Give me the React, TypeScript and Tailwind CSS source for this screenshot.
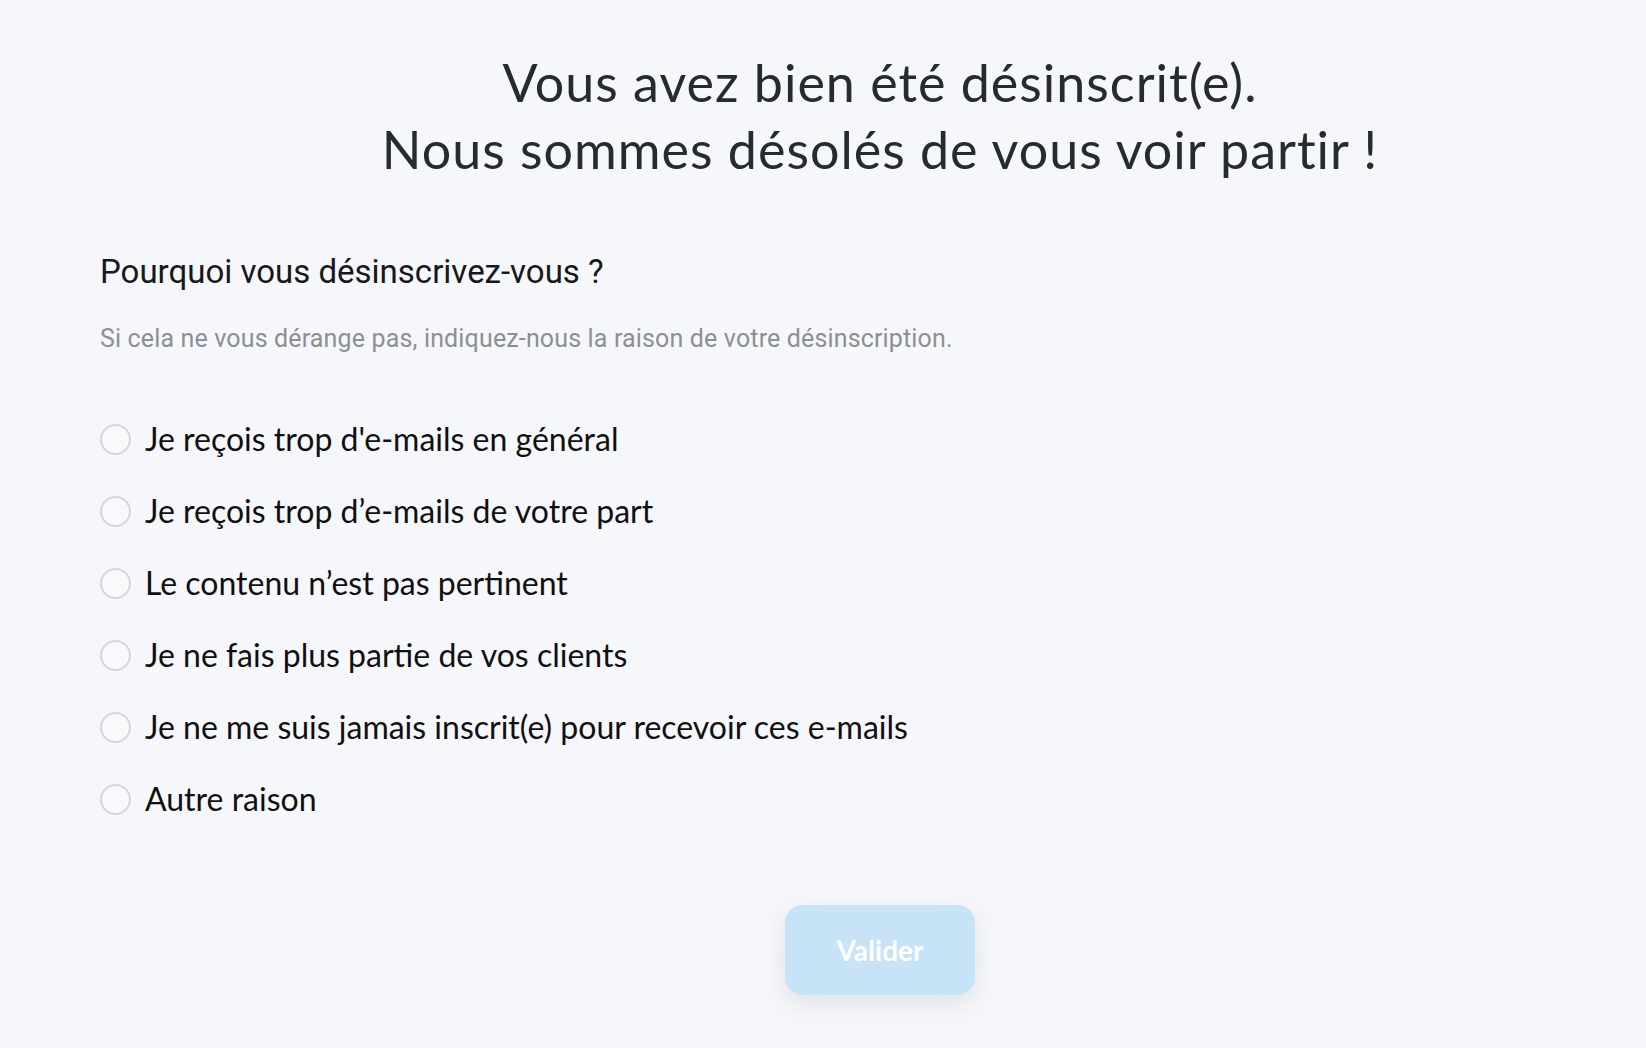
const options = [
  "Je reçois trop d'e-mails en général",
  "Je reçois trop d’e-mails de votre part",
  "Le contenu n’est pas pertinent",
  "Je ne fais plus partie de vos clients",
  "Je ne me suis jamais inscrit(e) pour recevoir ces e-mails",
  "Autre raison",
];

export default function App() {
  return (
    <div className="min-h-screen bg-[#f6f7fa] pl-[100px] pt-[49px] font-['Lato','Noto_Sans',sans-serif]">
      <h1 className="pl-[14px] text-center text-[52px] leading-[67px] font-normal tracking-[1px] text-[#272b30]">
        Vous avez bien été désinscrit(e).
        <br />
        Nous sommes désolés de vous voir partir !
      </h1>

      <h2 className="mt-[70px] font-['Roboto',sans-serif] text-[33px] leading-[38px] text-[#16181b]">
        Pourquoi vous désinscrivez-vous ?
      </h2>
      <p className="mt-[33px] font-['Roboto',sans-serif] text-[25px] leading-[30px] tracking-[0.15px] text-[#8b8f96]">
        Si cela ne vous dérange pas, indiquez-nous la raison de votre désinscription.
      </p>

      <div className="mt-[67px] flex flex-col gap-[36px]">
        {options.map((o) => (
          <label key={o} className="flex cursor-pointer items-center gap-[14px]">
            <span className="h-[31px] w-[31px] shrink-0 rounded-full border-2 border-[#d6d7da] bg-[#f8f9fb]" />
            <span className="text-[32px] leading-[36px] text-[#101010]">{o}</span>
          </label>
        ))}
      </div>

      <div className="mt-[88px] flex justify-center pl-[14px]">
        <button className="h-[90px] w-[190px] rounded-[18px] bg-[#c6e3f8] text-[28px] font-bold text-white shadow-[0_8px_24px_rgba(120,130,150,0.18)]">
          Valider
        </button>
      </div>
    </div>
  );
}
